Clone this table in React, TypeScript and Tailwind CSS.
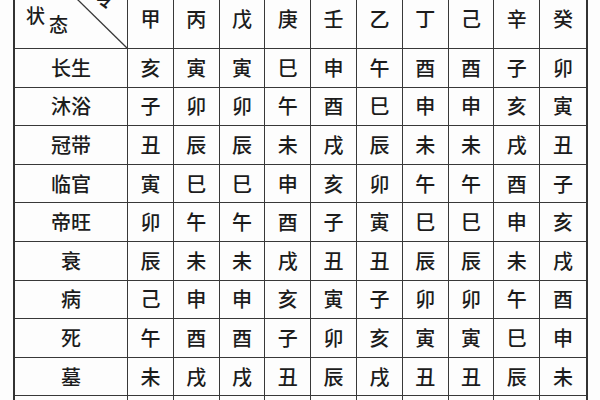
const stems = ["甲", "丙", "戊", "庚", "壬", "乙", "丁", "己", "辛", "癸"];

const rows: { name: string; cells: string[] }[] = [
  { name: "长生", cells: ["亥", "寅", "寅", "巳", "申", "午", "酉", "酉", "子", "卯"] },
  { name: "沐浴", cells: ["子", "卯", "卯", "午", "酉", "巳", "申", "申", "亥", "寅"] },
  { name: "冠带", cells: ["丑", "辰", "辰", "未", "戌", "辰", "未", "未", "戌", "丑"] },
  { name: "临官", cells: ["寅", "巳", "巳", "申", "亥", "卯", "午", "午", "酉", "子"] },
  { name: "帝旺", cells: ["卯", "午", "午", "酉", "子", "寅", "巳", "巳", "申", "亥"] },
  { name: "衰", cells: ["辰", "未", "未", "戌", "丑", "丑", "辰", "辰", "未", "戌"] },
  { name: "病", cells: ["己", "申", "申", "亥", "寅", "子", "卯", "卯", "午", "酉"] },
  { name: "死", cells: ["午", "酉", "酉", "子", "卯", "亥", "寅", "寅", "巳", "申"] },
  { name: "墓", cells: ["未", "戌", "戌", "丑", "辰", "戌", "丑", "丑", "辰", "未"] },
  // next row only peeks in at the bottom edge, its text is out of frame
  { name: "", cells: ["", "", "", "", "", "", "", "", "", ""] },
];

const line = "border-[#383838]";

export default function App() {
  return (
    <div
      className="w-[600px] h-[400px] overflow-hidden bg-[#fdfdfd] pl-[13px] text-[#1c1c1c]"
      style={{ fontFamily: '"Noto Sans CJK SC", "Noto Sans", sans-serif' }}
    >
      <div className="w-[575px] border-l-2 border-r-2 border-[#333] grid grid-cols-[113px_repeat(10,minmax(0,1fr))] grid-rows-[49px_repeat(10,38.6px)] text-[20px] font-medium leading-none">
        {/* header corner: 状态 / 令 split by a diagonal */}
        <div className={`relative flex items-start gap-[4px] pl-[11px] pt-[5px] text-[19px] border-b border-r ${line}`}>
          <svg className="absolute inset-0" width="113" height="49" viewBox="0 0 113 49">
            <line x1="62" y1="-1" x2="112" y2="48" stroke="#383838" strokeWidth="1.3" />
          </svg>
          <span>状</span>
          <span className="mt-[9px]">态</span>
          <span className="absolute left-[79px] top-[-11px]">令</span>
        </div>
        {stems.map((s, i) => (
          <div
            key={s}
            className={`flex justify-center pt-[9px] border-b ${line} ${i < 9 ? "border-r" : ""}`}
          >
            {s}
          </div>
        ))}

        {rows.map((r, ri) => (
          <div key={ri} className="contents">
            <div className={`flex items-center justify-center border-b border-r ${line}`}>
              {r.name}
            </div>
            {r.cells.map((c, i) => (
              <div
                key={i}
                className={`flex items-center justify-center border-b ${line} ${i < 9 ? "border-r" : ""}`}
              >
                {c}
              </div>
            ))}
          </div>
        ))}
      </div>
    </div>
  );
}
